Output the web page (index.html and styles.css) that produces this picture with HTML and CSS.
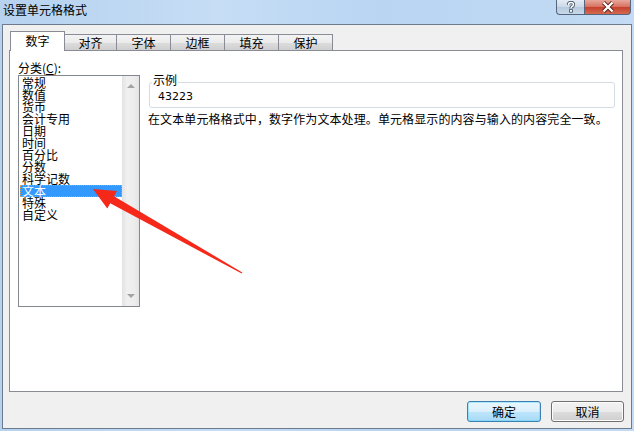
FILE: index.html
```html
<!DOCTYPE html>
<html lang="zh-CN">
<head>
  <meta charset="UTF-8">
  <title>设置单元格格式</title>
  <link rel="stylesheet" href="styles.css">
</head>
<body>
  <div class="window">
    <div class="titlebar">
      <span class="title">设置单元格格式</span>
      <div class="caption-btns">
        <div class="cap help">
          <svg width="12" height="12" viewBox="0 0 12 12"><path d="M3.5 4 Q3.5 1.5 6 1.5 Q8.5 1.5 8.5 3.6 Q8.5 5 6.8 5.8 Q6 6.2 6 7.4" fill="none" stroke="#3d4a5c" stroke-width="3.2"/><path d="M3.5 4 Q3.5 1.5 6 1.5 Q8.5 1.5 8.5 3.6 Q8.5 5 6.8 5.8 Q6 6.2 6 7.4" fill="none" stroke="#fff" stroke-width="1.6"/><rect x="4.6" y="8.6" width="2.8" height="2.6" fill="#fff" stroke="#3d4a5c" stroke-width="0.8"/></svg>
        </div>
        <div class="cap close">
          <svg width="14" height="12" viewBox="0 0 14 12"><path d="M2.5 1.5 L11.5 10.5 M11.5 1.5 L2.5 10.5" stroke="#5a2018" stroke-width="4.2"/><path d="M2.5 1.5 L11.5 10.5 M11.5 1.5 L2.5 10.5" stroke="#fff" stroke-width="2.4"/></svg>
        </div>
      </div>
    </div>

    <div class="client">
      <div class="tabs">
        <div class="tab active">数字</div>
        <div class="tab narrow">对齐</div>
        <div class="tab">字体</div>
        <div class="tab">边框</div>
        <div class="tab">填充</div>
        <div class="tab">保护</div>
      </div>

      <div class="panel">
        <div class="category">
          <div class="label">分类(<u>C</u>):</div>
          <div class="listbox">
            <ul class="items">
              <li>常规</li>
              <li>数值</li>
              <li>货币</li>
              <li>会计专用</li>
              <li>日期</li>
              <li>时间</li>
              <li>百分比</li>
              <li>分数</li>
              <li>科学记数</li>
              <li class="selected">文本</li>
              <li>特殊</li>
              <li>自定义</li>
            </ul>
            <div class="scrollbar">
              <span class="arrow up"></span>
              <span class="arrow down"></span>
            </div>
          </div>
        </div>

        <div class="details">
          <fieldset class="sample">
            <legend>示例</legend>
            <div class="value">43223</div>
          </fieldset>
          <p class="desc">在文本单元格格式中，数字作为文本处理。单元格显示的内容与输入的内容完全一致。</p>
        </div>
      </div>

      <div class="footer">
        <button class="btn default">确定</button>
        <button class="btn">取消</button>
      </div>
    </div>

    <svg class="annotation" width="634" height="431" viewBox="0 0 634 431">
      <polygon points="93,189 117,191 114,196.3 242.3,272.4 241.7,273.6 110.2,203.3 107.3,208.5" fill="#f5281a"/>
    </svg>
  </div>
</body>
</html>
```

FILE: styles.css
```css
* {
  box-sizing: border-box;
}

body {
  margin: 0;
  font-family: "Noto Sans CJK SC", "Liberation Sans", sans-serif;
  font-size: 12px;
  color: #000;
}

.window {
  position: relative;
  width: 634px;
  height: 431px;
  display: flex;
  flex-direction: column;
  background: linear-gradient(90deg, #b6d2ef 0%, #c6ddf5 35%, #b9d5f2 60%, #c3dbf4 100%);
}

/* title bar */
.titlebar {
  height: 24px;
  display: flex;
  justify-content: space-between;
  align-items: flex-start;
  padding: 0 3px 0 3px;
}

.title {
  line-height: 20px;
  font-size: 12px;
}

.caption-btns {
  display: flex;
}

.cap {
  height: 15px;
  display: flex;
  align-items: center;
  justify-content: center;
  border: 1px solid #55657d;
  border-top: none;
}

.help {
  width: 28px;
  border-right: none;
  border-radius: 0 0 0 4px;
  background: linear-gradient(#e4ecf5, #c9d8e8 50%, #b6c9de 51%, #c8d9ea);
}

.close {
  width: 47px;
  border-radius: 0 0 4px 0;
  background: linear-gradient(#e7a89a, #d77060 50%, #c4402c 51%, #d66a4f);
}

/* client area */
.client {
  height: 405px;
  margin: 0 2px;
  border: 1px solid #6d7b8d;
  background: #f0f0f0;
  padding: 6px 7px 0 6px;
  display: flex;
  flex-direction: column;
}

.tabs {
  display: flex;
  align-items: flex-end;
  height: 19px;
  padding-left: 1px;
  position: relative;
  z-index: 1;
}

.tab {
  width: 55px;
  height: 16px;
  margin-left: -1px;
  border: 1px solid #898c95;
  border-bottom: none;
  background: linear-gradient(#f3f3f3, #ebebeb 50%, #dddddd 51%, #cfcfcf);
  text-align: center;
  line-height: 15px;
}

.tab.narrow {
  width: 53px;
}

.tab.active {
  margin-left: 0;
  height: 20px;
  margin-bottom: -1px;
  background: #fff;
  line-height: 18px;
}

.panel {
  height: 342px;
  width: 614px;
  border: 1px solid #898c95;
  background: #fff;
  display: flex;
  padding: 9px 7px 0 8px;
}

.category {
  width: 122px;
  flex: none;
}

.label {
  line-height: 15px;
}

.listbox {
  height: 232px;
  border: 1px solid #828790;
  display: flex;
}

.items {
  list-style: none;
  margin: 0;
  padding: 1px 0 0 1px;
  flex: 1;
}

.items li {
  line-height: 12px;
  height: 12px;
  padding-left: 2px;
  white-space: nowrap;
}

.items li.selected {
  background: #3399ff;
  color: #fff;
  outline: 1px dotted #d89a4e;
  outline-offset: -1px;
}

.scrollbar {
  width: 17px;
  flex: none;
  background: linear-gradient(90deg, #e2e2e2, #f0f0f0 30%, #ededed 70%, #e4e4e4);
  display: flex;
  flex-direction: column;
  justify-content: space-between;
  align-items: center;
  padding: 8px 0 8px 1px;
}

.arrow {
  width: 0;
  height: 0;
  border-left: 4px solid transparent;
  border-right: 4px solid transparent;
}

.arrow.up {
  border-bottom: 4px solid #a3a3a3;
}

.arrow.down {
  border-top: 4px solid #a3a3a3;
}

/* right side */
.details {
  flex: 1;
  min-width: 0;
  padding-left: 9px;
  padding-top: 14px;
}

.sample {
  margin: 0;
  border: 1px solid #d3dbe3;
  border-radius: 3px;
  padding: 0 8px 3px 8px;
}

.sample legend {
  padding: 0 1px 4px 1px;
  margin-left: -6px;
  line-height: 12px;
}

.value {
  font-family: "DejaVu Sans", sans-serif;
  font-size: 11px;
  line-height: 14px;
}

.desc {
  margin: 4px 0 0 -1px;
  line-height: 14px;
  letter-spacing: 0.1px;
  white-space: nowrap;
}

/* buttons */
.footer {
  display: flex;
  justify-content: flex-end;
  gap: 10px;
  margin-top: 9px;
}

.btn {
  width: 73px;
  height: 21px;
  font-family: inherit;
  font-size: 12px;
  padding: 0;
  border: 1px solid #707070;
  border-radius: 3px;
  background: linear-gradient(#f2f2f2, #ebebeb 50%, #dddddd 51%, #cfcfcf);
  box-shadow: inset 0 0 0 1px #fcfcfc;
}

.btn.default {
  width: 74px;
  border-color: #3c7fb1;
  background: linear-gradient(#eaf6fd, #d9f0fc 50%, #bee6fd 51%, #a7d9f5);
  box-shadow: inset 0 0 0 1px #48d4fc66;
}

.annotation {
  position: absolute;
  left: 0;
  top: 0;
  pointer-events: none;
  z-index: 5;
}
```
